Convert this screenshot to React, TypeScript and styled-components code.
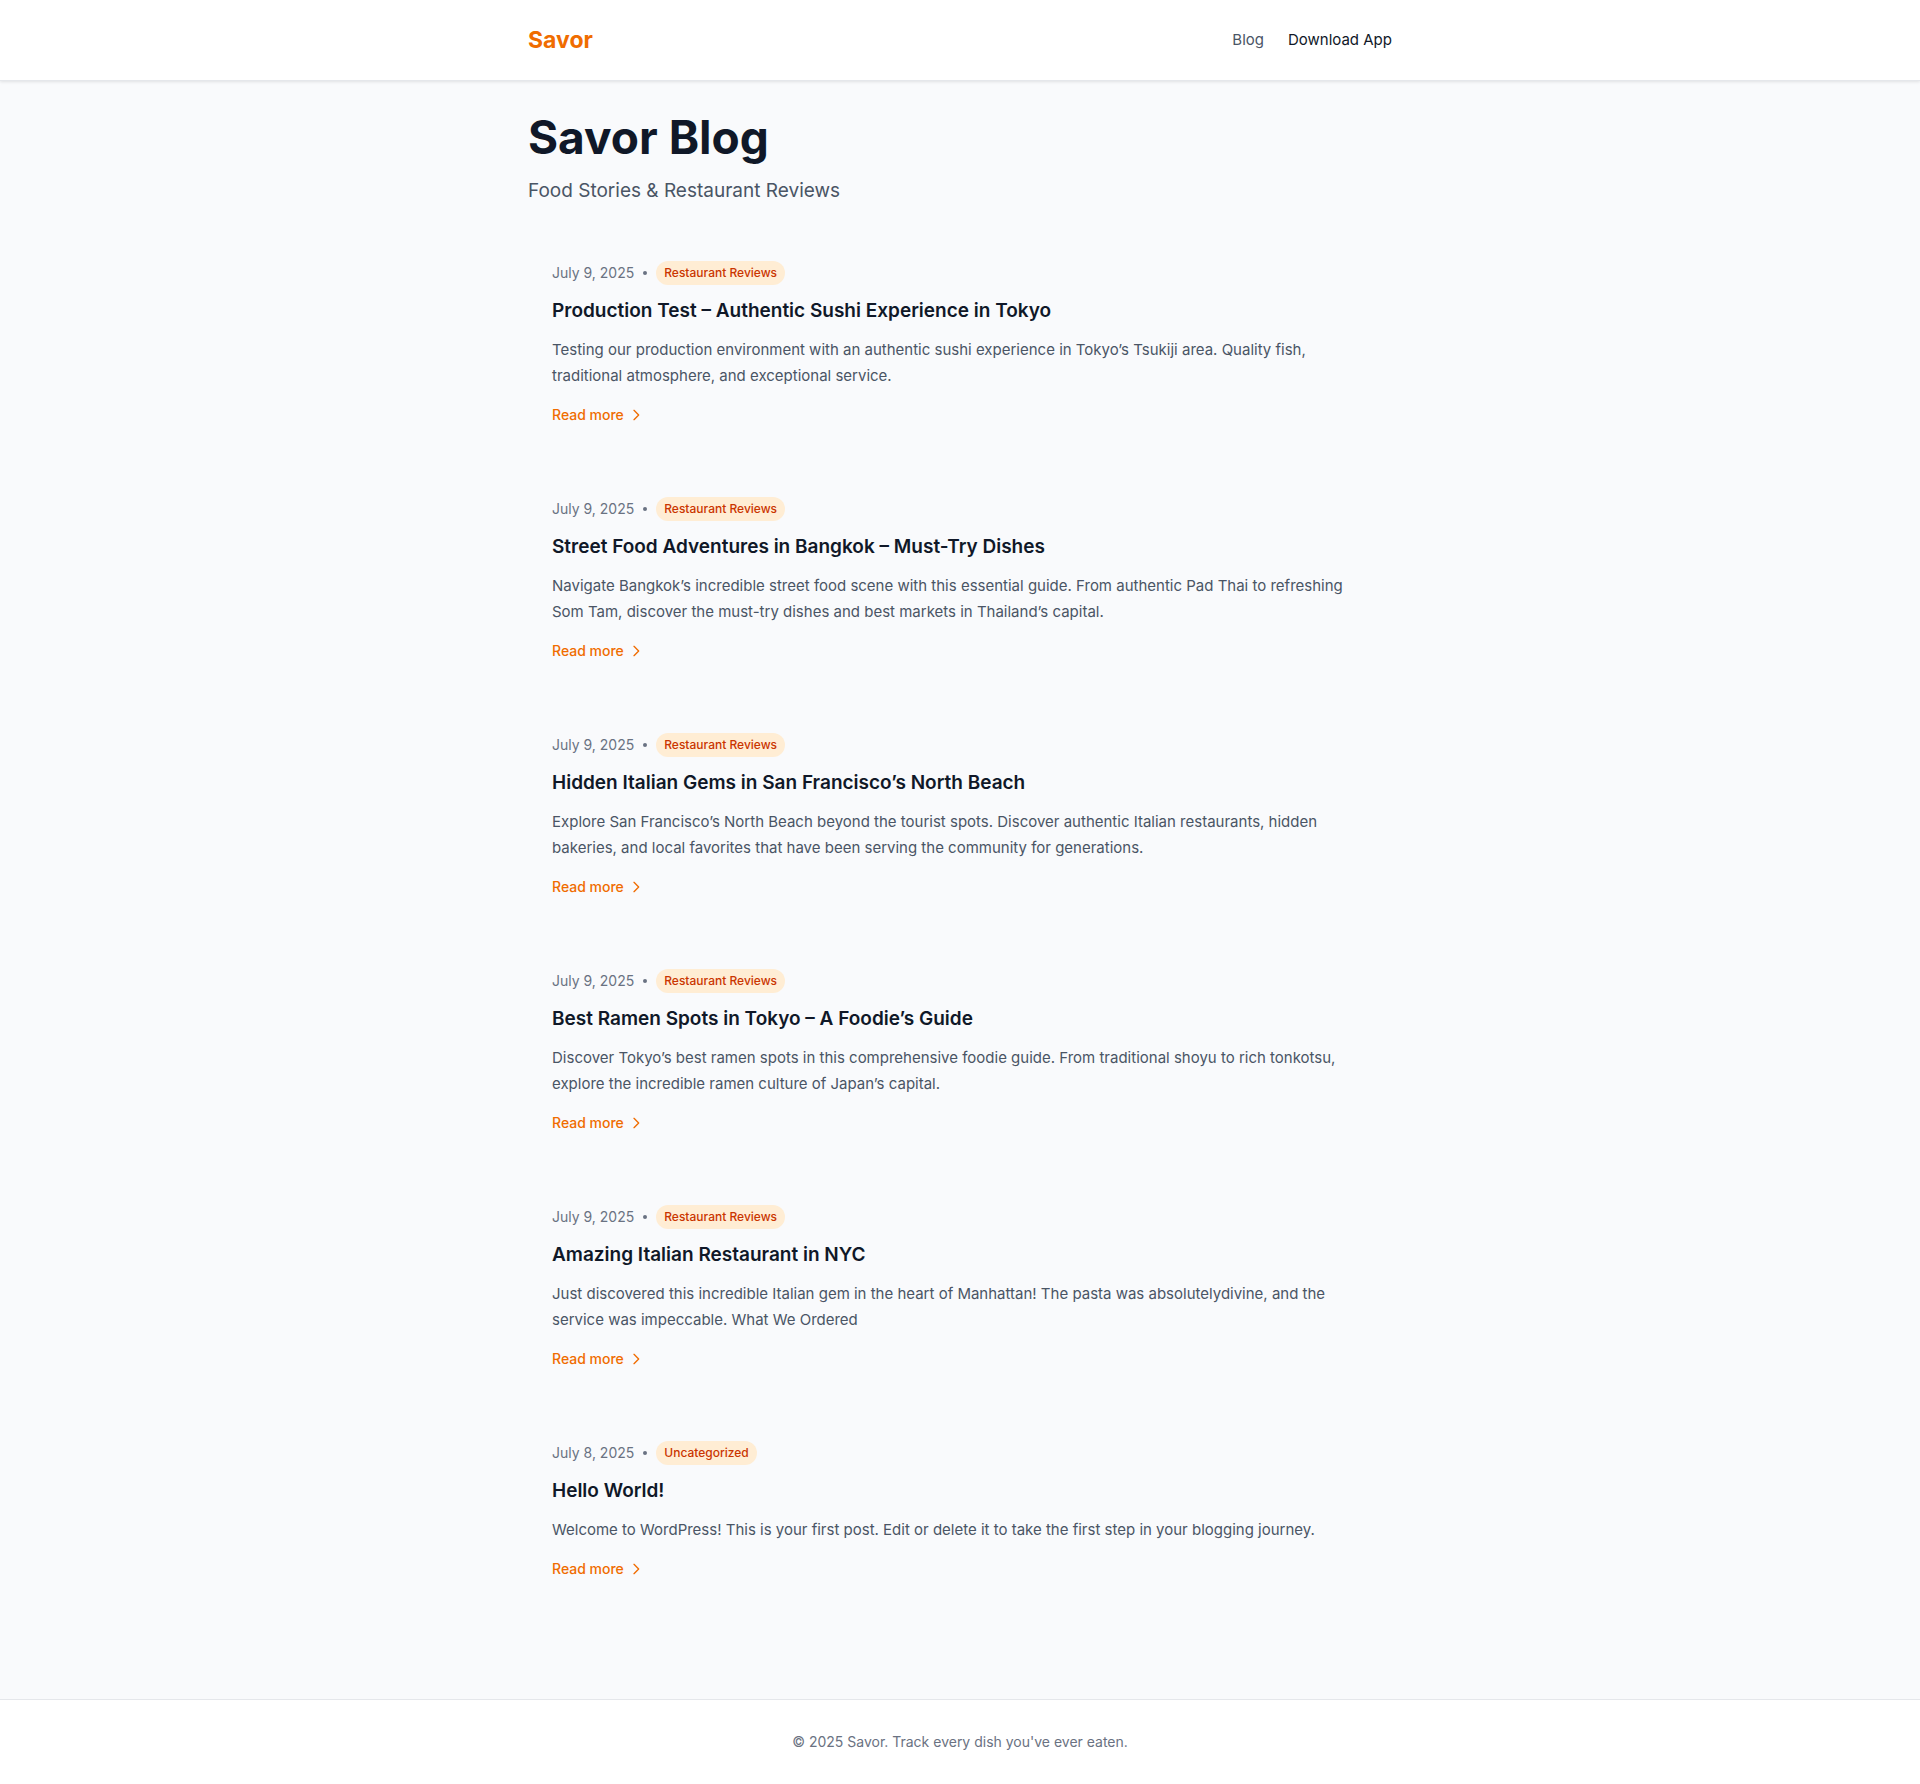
import React from "react";
import styled, { createGlobalStyle } from "styled-components";

const GlobalStyle = createGlobalStyle`
  *, *::before, *::after { box-sizing: border-box; }
  html { background: #fff; }
  body {
    margin: 0;
    background: #f9fafc;
    color: #101828;
    font-family: Inter, "Liberation Sans", sans-serif;
    font-size: 15px;
    line-height: 24px;
    -webkit-font-smoothing: antialiased;
  }
  h1, h2, p { margin: 0; }
  a { color: inherit; text-decoration: none; }
`;

const Page = styled.div`
  min-height: 100vh;
  display: flex;
  flex-direction: column;
`;

const Container = styled.div`
  width: 100%;
  max-width: 896px;
  margin: 0 auto;
  padding: 0 16px;
`;

const Header = styled.header`
  background: #fff;
  border-bottom: 1px solid #e5e7eb;
  box-shadow: 0 1px 3px rgba(0, 0, 0, 0.1);
`;

const HeaderRow = styled(Container)`
  display: flex;
  align-items: center;
  justify-content: space-between;
  padding-top: 24px;
  padding-bottom: 24px;
`;

const Brand = styled.a`
  && { color: #f06c00; }
  font-size: 23px;
  line-height: 32px;
  font-weight: 700;
`;

const Nav = styled.nav`
  display: flex;
  gap: 24px;
`;

const NavLink = styled.a<{ $strong?: boolean }>`
  && { color: ${(p) => (p.$strong ? "#101828" : "#4a5565")}; }
`;

const Main = styled(Container).attrs({ as: "main" })`
  flex: 1;
  padding-top: 32px;
  padding-bottom: 96px;
`;

const Intro = styled.div`
  margin-bottom: 32px;
`;

const PageTitle = styled.h1`
  font-size: 46px;
  line-height: 48px;
  font-weight: 700;
`;

const Subtitle = styled.p`
  margin-top: 16px;
  color: #4a5565;
  font-size: 19px;
  line-height: 28px;
`;

const Posts = styled.div`
  display: flex;
  flex-direction: column;
  gap: 24px;
`;

const Post = styled.article`
  padding: 24px;
`;

const Meta = styled.div`
  display: flex;
  align-items: center;
  gap: 8px;
  margin-bottom: 12px;
  color: #6a7282;
  font-size: 14px;
  line-height: 20px;
`;

const Dot = styled.span`
  width: 4px;
  height: 4px;
  margin: 0 1px;
  border-radius: 50%;
  background: currentColor;
`;

const Tag = styled.span`
  padding: 4px 8px;
  border-radius: 9999px;
  background: #ffedd4;
  color: #ca3500;
  font-size: 12px;
  line-height: 16px;
  font-weight: 500;
`;

const PostTitle = styled.h2`
  margin-bottom: 12px;
  font-size: 19px;
  line-height: 28px;
  font-weight: 600;
`;

const Excerpt = styled.p`
  margin-bottom: 16px;
  color: #4a5565;
  line-height: 26px;
`;

const ReadMore = styled.a`
  && { color: #f06c00; }
  display: flex;
  width: fit-content;
  align-items: center;
  gap: 4px;
  font-size: 14px;
  line-height: 20px;
  font-weight: 500;
`;

const Footer = styled.footer`
  background: #fff;
  border-top: 1px solid #e5e7eb;
  color: #6a7282;
  font-size: 14px;
  line-height: 20px;
  text-align: center;
`;

const FooterInner = styled(Container)`
  padding-top: 32px;
  padding-bottom: 32px;
`;

const review = "Restaurant Reviews";

const posts = [
  { date: "July 9, 2025", tag: review, title: "Production Test – Authentic Sushi Experience in Tokyo", text: "Testing our production environment with an authentic sushi experience in Tokyo’s Tsukiji area. Quality fish, traditional atmosphere, and exceptional service." },
  { date: "July 9, 2025", tag: review, title: "Street Food Adventures in Bangkok – Must-Try Dishes", text: "Navigate Bangkok’s incredible street food scene with this essential guide. From authentic Pad Thai to refreshing Som Tam, discover the must-try dishes and best markets in Thailand’s capital." },
  { date: "July 9, 2025", tag: review, title: "Hidden Italian Gems in San Francisco’s North Beach", text: "Explore San Francisco’s North Beach beyond the tourist spots. Discover authentic Italian restaurants, hidden bakeries, and local favorites that have been serving the community for generations." },
  { date: "July 9, 2025", tag: review, title: "Best Ramen Spots in Tokyo – A Foodie’s Guide", text: "Discover Tokyo’s best ramen spots in this comprehensive foodie guide. From traditional shoyu to rich tonkotsu, explore the incredible ramen culture of Japan’s capital." },
  { date: "July 9, 2025", tag: review, title: "Amazing Italian Restaurant in NYC", text: "Just discovered this incredible Italian gem in the heart of Manhattan! The pasta was absolutelydivine, and the service was impeccable. What We Ordered" },
  { date: "July 8, 2025", tag: "Uncategorized", title: "Hello World!", text: "Welcome to WordPress! This is your first post. Edit or delete it to take the first step in your blogging journey." },
];

export default function App() {
  return (
    <Page>
      <GlobalStyle />
      <Header>
        <HeaderRow>
          <Brand href="#">Savor</Brand>
          <Nav>
            <NavLink href="#blog">Blog</NavLink>
            <NavLink href="#download" $strong>Download App</NavLink>
          </Nav>
        </HeaderRow>
      </Header>
      <Main>
        <Intro>
          <PageTitle>Savor Blog</PageTitle>
          <Subtitle>Food Stories &amp; Restaurant Reviews</Subtitle>
        </Intro>
        <Posts>
          {posts.map((post) => (
            <Post key={post.title}>
              <Meta>
                <time>{post.date}</time>
                <Dot />
                <Tag>{post.tag}</Tag>
              </Meta>
              <PostTitle><a href="#post">{post.title}</a></PostTitle>
              <Excerpt>{post.text}</Excerpt>
              <ReadMore href="#post">
                Read more
                <svg width="16" height="16" viewBox="0 0 24 24" fill="none" stroke="currentColor" strokeWidth="2" strokeLinecap="round" strokeLinejoin="round" aria-hidden="true">
                  <path d="M9 5l7 7-7 7" />
                </svg>
              </ReadMore>
            </Post>
          ))}
        </Posts>
      </Main>
      <Footer>
        <FooterInner>© 2025 Savor. Track every dish you've ever eaten.</FooterInner>
      </Footer>
    </Page>
  );
}
